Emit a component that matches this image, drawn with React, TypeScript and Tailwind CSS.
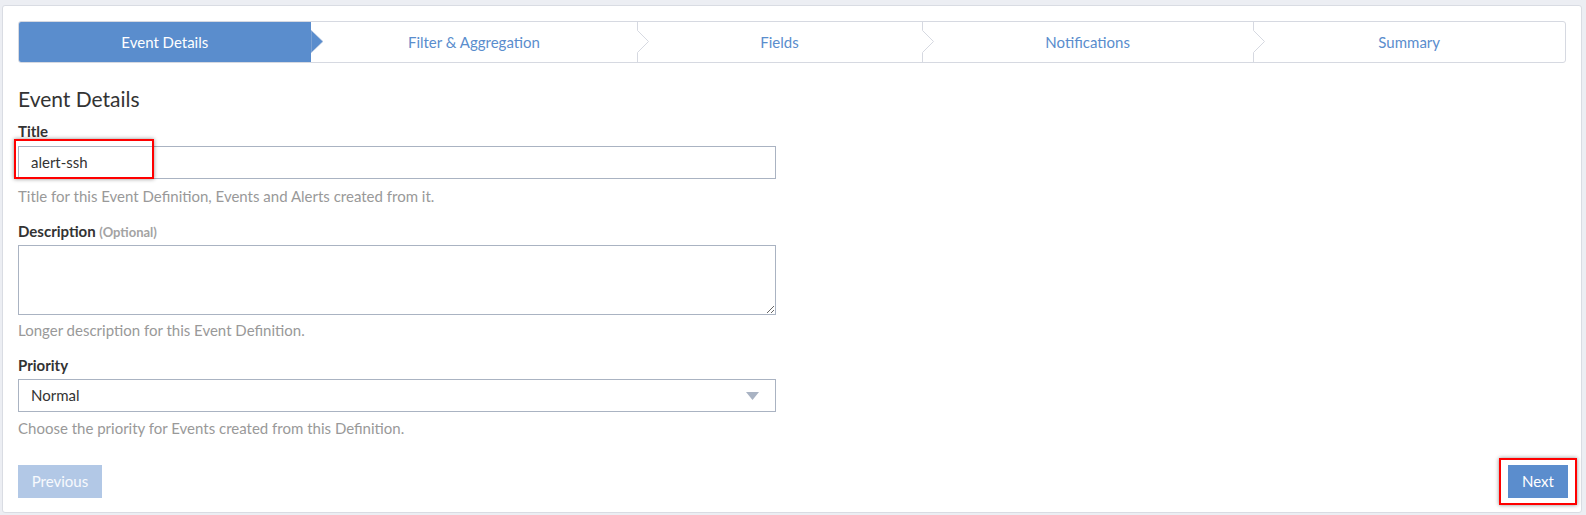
import React from "react";

const steps = [
  { label: "Event Details", w: 292 },
  { label: "Filter & Aggregation", w: 327 },
  { label: "Fields", w: 285 },
  { label: "Notifications", w: 332 },
  { label: "Summary", w: 312 },
];

function Stepper() {
  return (
    <div className="flex h-[42px] w-[1548px] rounded-[3px] border border-[#d6d9e1] bg-white">
      {steps.map((s, i) => {
        const active = i === 0;
        const last = i === steps.length - 1;
        return (
          <div
            key={s.label}
            style={{ width: s.w }}
            className={
              "relative flex h-full items-center justify-center text-[15px] " +
              (active ? "rounded-l-[2px] bg-[#5a8dcd] text-white" : "text-[#5a8dcd]")
            }
          >
            <span>{s.label}</span>
            {!last && (
              <svg
                className="absolute left-full top-[-1px] z-10"
                width="14"
                height="42"
                viewBox="0 0 14 42"
              >
                {active ? (
                  <polygon points="0,9 12,20.5 0,32" fill="#5a8dcd" stroke="#c9d2e0" strokeWidth="0.6" />
                ) : (
                  <polyline
                    points="0.5,0 0.5,9.5 11.5,20.5 0.5,31.5 0.5,42"
                    fill="#ffffff"
                    stroke="#d6d9e1"
                    strokeWidth="1"
                  />
                )}
              </svg>
            )}
          </div>
        );
      })}
    </div>
  );
}

export default function App() {
  return (
    <div
      className="h-[515px] w-[1586px] overflow-hidden bg-[#eceef3] pt-[5px] pl-[2px]"
      style={{ fontFamily: "Lato, 'Open Sans', sans-serif" }}
    >
      <div className="h-[508px] w-[1580px] rounded-[3px] border border-[#d9dce3] bg-white px-[15px] pt-[15px]">
        <Stepper />

        <h2 className="mt-[24px] text-[21px] leading-[24px] text-[#333]">Event Details</h2>

        <label className="mt-[10px] block text-[15px] font-bold leading-[20px] text-[#333]">Title</label>
        <div className="relative mt-[5px] w-[758px]">
          <div className="flex h-[33px] items-center border border-[#aab3c2] px-[12px] text-[15px] text-[#333]">
            alert-ssh
          </div>
          <div className="pointer-events-none absolute left-[-4px] top-[-7px] h-[40px] w-[140px] border-2 border-[#f00] shadow-[0_0_4px_rgba(0,0,0,0.45)]" />
        </div>
        <p className="mt-[7px] text-[15px] leading-[20px] text-[#999]">
          Title for this Event Definition, Events and Alerts created from it.
        </p>

        <label className="mt-[15px] block text-[15px] font-bold leading-[20px] text-[#333]">
          Description <span className="text-[13px] font-bold text-[#a3a3a3]">(Optional)</span>
        </label>
        <textarea
          className="mt-[3px] block h-[70px] w-[758px] border border-[#aab3c2] px-[12px] py-[6px] text-[15px] outline-none"
          defaultValue=""
        />
        <p className="mt-[5px] text-[15px] leading-[20px] text-[#999]">
          Longer description for this Event Definition.
        </p>

        <label className="mt-[15px] block text-[15px] font-bold leading-[20px] text-[#333]">Priority</label>
        <div className="mt-[4px] flex h-[33px] w-[758px] items-center justify-between border border-[#aab3c2] pl-[12px] pr-[16px] text-[15px] text-[#333]">
          <span>Normal</span>
          <svg width="13" height="8" viewBox="0 0 13 8">
            <polygon points="0,0 13,0 6.5,8" fill="#a9b3c3" />
          </svg>
        </div>
        <p className="mt-[6px] text-[15px] leading-[20px] text-[#999]">
          Choose the priority for Events created from this Definition.
        </p>

        <div className="mt-[27px] flex items-center justify-between">
          <button className="h-[33px] w-[84px] bg-[#b2c8e6] text-[15px] text-white/90">Previous</button>
          <div className="relative mr-[-2px]">
            <button className="h-[33px] w-[60px] bg-[#5b8dcd] text-[15px] text-white">Next</button>
            <div className="pointer-events-none absolute left-[-9px] right-[-9px] top-[-7px] bottom-[-7px] border-2 border-[#f00] shadow-[0_0_4px_rgba(0,0,0,0.45)]" />
          </div>
        </div>
      </div>
    </div>
  );
}
